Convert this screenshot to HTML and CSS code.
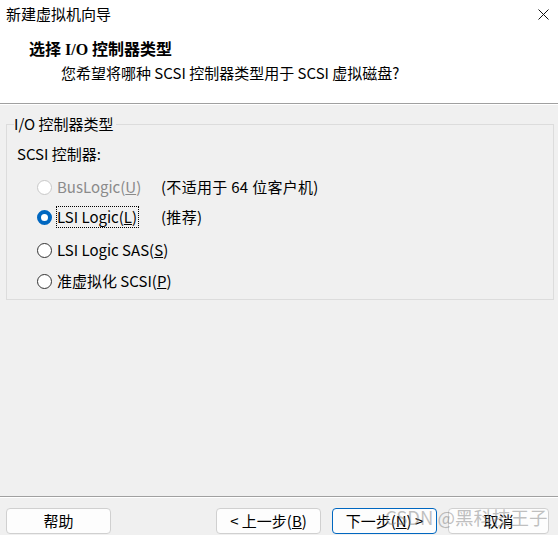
FILE: index.html
```html
<!DOCTYPE html>
<html lang="zh-CN">
<head>
<meta charset="utf-8">
<title>新建虚拟机向导</title>
<link rel="stylesheet" href="styles.css">
</head>
<body>
<div class="window">
  <div class="top">
    <div class="titlebar">
      <span class="title">新建虚拟机向导</span>
      <svg class="close" width="11" height="11" viewBox="0 0 11 11"><path d="M0.5 0.5 L10.5 10.5 M10.5 0.5 L0.5 10.5" stroke="#111" stroke-width="1"/></svg>
    </div>
    <div class="header">
      <div class="heading">选择 I/O 控制器类型</div>
      <div class="subtitle">您希望将哪种 SCSI 控制器类型用于 SCSI 虚拟磁盘?</div>
    </div>
  </div>
  <div class="sep"></div>
  <div class="body">
    <fieldset class="group">
      <legend>I/O 控制器类型</legend>
      <div class="label">SCSI 控制器:</div>
      <div class="row disabled">
        <span class="radio"></span>
        <span class="opt">BusLogic(<u>U</u>)</span>
        <span class="note">(不适用于 64 位客户机)</span>
      </div>
      <div class="row">
        <span class="radio checked"></span>
        <span class="opt"><span class="focus">LSI Logic(<u>L</u>)</span></span>
        <span class="note">(推荐)</span>
      </div>
      <div class="row row3">
        <span class="radio"></span>
        <span class="opt">LSI Logic SAS(<u>S</u>)</span>
      </div>
      <div class="row row4">
        <span class="radio"></span>
        <span class="opt">准虚拟化 SCSI(<u>P</u>)</span>
      </div>
    </fieldset>
  </div>
  <div class="sep"></div>
  <div class="footer">
    <button class="btn">帮助</button>
    <div class="right">
      <button class="btn">&lt; 上一步(<u>B</u>)</button>
      <button class="btn default">下一步(<u>N</u>) &gt;</button>
      <button class="btn cancel">取消</button>
    </div>
  </div>
  <div class="watermark">CSDN @黑科技王子</div>
</div>
</body>
</html>
```

FILE: styles.css
```css
* { box-sizing: border-box; }
html, body { margin: 0; padding: 0; }
body {
  width: 558px;
  height: 535px;
  background: #f0f0f0;
  font-family: "Noto Sans CJK SC", "Noto Sans", sans-serif;
  font-size: 15px;
  color: #000;
  overflow: hidden;
}
.window {
  position: relative;
  width: 558px;
  height: 535px;
  display: flex;
  flex-direction: column;
}
.top {
  background: #fff;
  height: 103px;
  flex: none;
}
.titlebar {
  height: 28px;
  display: flex;
  align-items: center;
  justify-content: space-between;
  padding: 0 9px 0 6px;
}
.title { font-size: 15px; line-height: 28px; }
.close { display: block; }
.header { padding: 13px 0 0 29px; }
.heading {
  font-family: "Liberation Serif", "Noto Sans CJK SC", serif;
  font-weight: bold;
  font-size: 16px;
  line-height: 18px;
}
.subtitle {
  padding-left: 32px;
  line-height: 28px;
  font-size: 15px;
}
.sep {
  flex: none;
  height: 2px;
  border-top: 1px solid #a0a0a0;
  border-bottom: 1px solid #fff;
}
.body {
  flex: 1;
  padding: 9px 4px 0 6px;
}
.group {
  margin: 0;
  padding: 0 0 3px 10px;
  border: 1px solid #dcdcdc;
}
.group legend {
  padding: 0 2px 0 0;
  margin-left: -3px;
  font-size: 15px;
  line-height: 20px;
}
.label { line-height: 20px; margin: 10px 0 8px 0; }
.row {
  display: flex;
  align-items: center;
  height: 30px;
  padding-left: 20px;
}
.row3 { margin-top: 3px; }
.row4 { margin-top: 1px; }
.radio {
  width: 15px;
  height: 15px;
  border-radius: 50%;
  border: 1px solid #333;
  background: #fff;
  flex: none;
  margin-right: 4px;
}
.radio.checked {
  border: 4px solid #0067c0;
  background: #fff;
}
.disabled .radio { border-color: #c8c8c8; }
.disabled .opt { color: #8a8a8a; }
.opt {
  width: 105px;
  line-height: 20px;
  white-space: nowrap;
  padding-left: 1px;
}
.focus {
  display: inline-block;
  margin-left: -1px;
  padding: 0 1px 0 0;
  border: 1px dotted #000;
  line-height: 20px;
}
.note { line-height: 20px; white-space: nowrap; letter-spacing: 0.3px; }
.footer {
  flex: none;
  height: 37px;
  display: flex;
  align-items: flex-start;
  justify-content: space-between;
  padding: 10px 9px 0 6px;
}
.right { display: flex; gap: 11px; }
.btn {
  width: 105px;
  height: 26px;
  background: #fdfdfd;
  border: 1px solid #d0d0d0;
  border-radius: 4px;
  font-family: "Noto Sans CJK SC", "Noto Sans", sans-serif;
  font-size: 15px;
  color: #000;
  padding: 0;
  line-height: 22px;
}
.btn.default { border-color: #0067c0; }
.btn.cancel { width: 101px; }
.watermark {
  position: absolute;
  left: 385px;
  top: 504px;
  font-size: 18.5px;
  color: rgba(130, 130, 130, 0.5);
  white-space: nowrap;
  font-family: "Noto Sans CJK SC", sans-serif;
  line-height: 26px;
}
```
